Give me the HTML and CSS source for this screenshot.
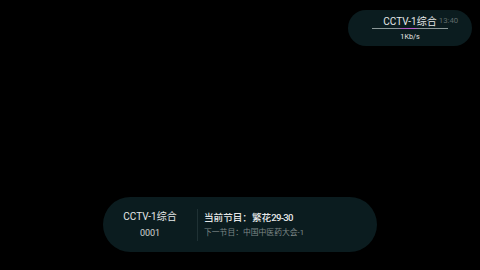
FILE: index.html
```html
<!DOCTYPE html>
<html lang="zh">
<head>
<meta charset="utf-8">
<link rel="stylesheet" href="styles.css">
</head>
<body>
<div class="screen">
  <div class="status">
    <div class="status-title">
      <span class="status-name">CCTV-1综合</span>
      <span class="status-time">13:40</span>
    </div>
    <div class="status-line"></div>
    <div class="status-speed">1Kb/s</div>
  </div>
  <div class="info">
    <div class="channel">
      <div class="channel-name">CCTV-1综合</div>
      <div class="channel-num">0001</div>
    </div>
    <div class="divider"></div>
    <div class="programs">
      <div class="prog-current">当前节目：繁花<span class="ep">29-30</span></div>
      <div class="prog-next">下一节目：中国中医药大会-1</div>
    </div>
  </div>
</div>
</body>
</html>
```
FILE: styles.css
```css
html, body {
  margin: 0;
  padding: 0;
  background: #000;
}
.screen {
  width: 480px;
  height: 270px;
  display: flex;
  flex-direction: column;
  justify-content: space-between;
  font-family: Roboto, "Noto Sans CJK SC", sans-serif;
  color: #e6e8e8;
}
.status {
  align-self: flex-end;
  margin: 10px 8px 0 0;
  width: 124px;
  height: 36px;
  box-sizing: border-box;
  border-radius: 18px;
  background: #0b1c1f;
  display: flex;
  flex-direction: column;
  align-items: center;
  padding-top: 3px;
}
.status-title {
  position: relative;
  height: 14px;
  line-height: 14px;
}
.status-name {
  font-size: 10px;
}
.status-time {
  position: absolute;
  left: 100%;
  top: 1px;
  margin-left: 2px;
  font-size: 7.8px;
  color: #5f696a;
}
.status-line {
  width: 76px;
  height: 1px;
  margin-top: 1px;
  background: linear-gradient(90deg, #8b9797 0%, #8b9797 34%, #b054c0 40%, #c060d0 56%, #8b9797 62%, #8b9797 100%);
}
.status-speed {
  font-size: 7.2px;
  line-height: 10px;
  margin-top: 3px;
}
.info {
  align-self: flex-start;
  margin: 0 0 18px 103px;
  width: 274px;
  height: 55px;
  border-radius: 28px;
  background: #0b1c1f;
  display: flex;
  align-items: center;
}
.channel {
  width: 94px;
  display: flex;
  flex-direction: column;
  align-items: center;
}
.channel-name {
  font-size: 10px;
  line-height: 14px;
}
.channel-num {
  font-size: 9px;
  line-height: 12px;
  margin-top: 3px;
  color: #d0d4d4;
}
.divider {
  width: 1px;
  height: 32px;
  background: #1f3134;
}
.programs {
  padding-left: 6px;
  display: flex;
  flex-direction: column;
}
.prog-current {
  font-size: 9.6px;
  line-height: 14px;
  font-weight: 500;
}
.ep {
  letter-spacing: -0.7px;
}
.prog-next {
  font-size: 7.8px;
  line-height: 12px;
  margin-top: 2px;
  color: #7e8888;
}
```
